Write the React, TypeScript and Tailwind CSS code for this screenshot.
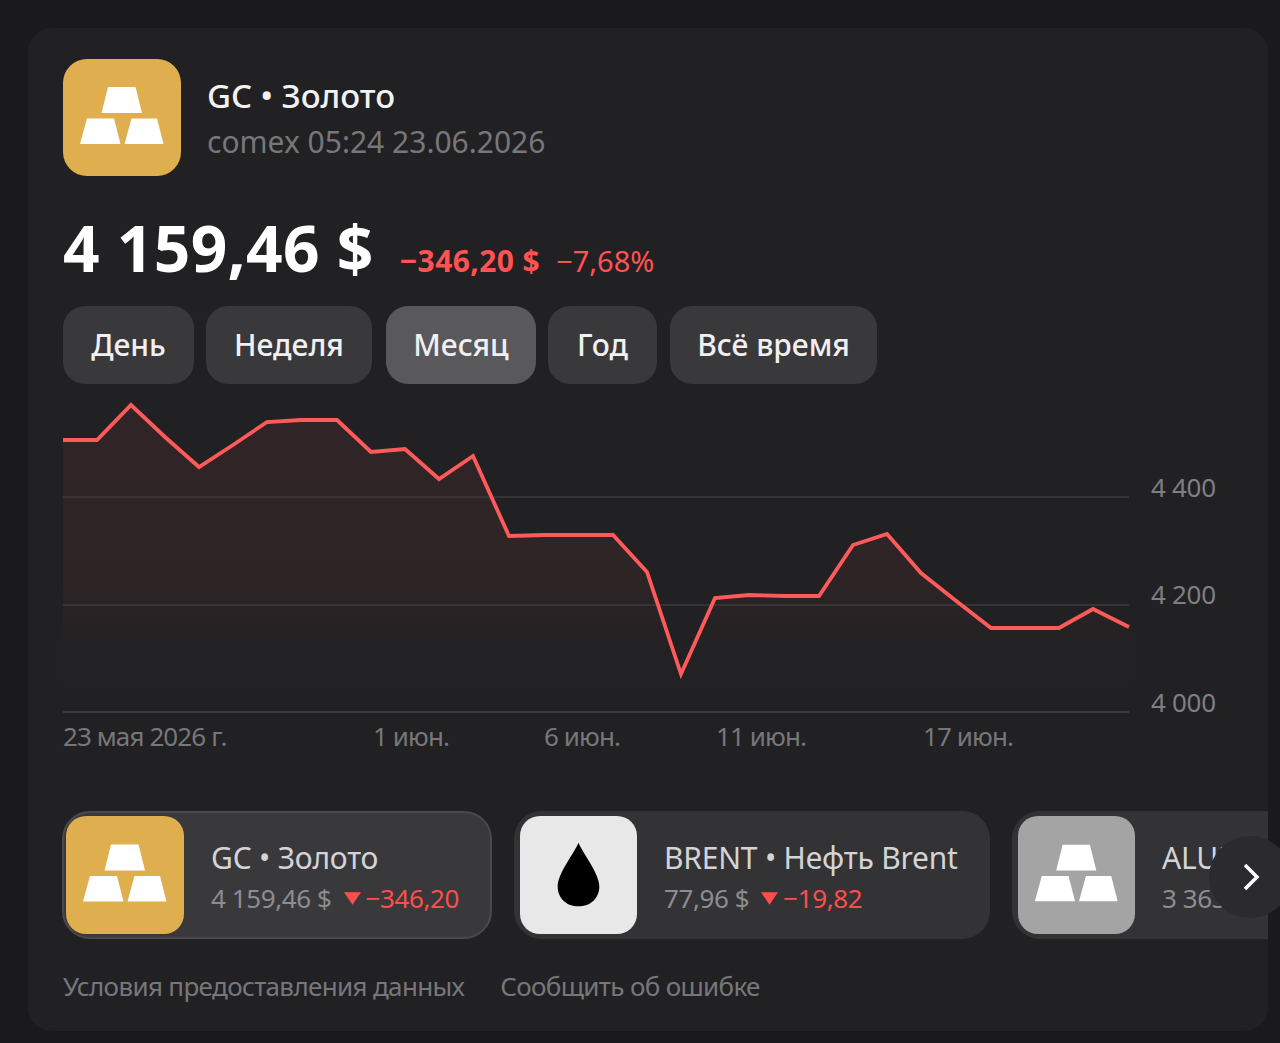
const font = { fontFamily: '"Noto Sans", "Liberation Sans", sans-serif' };

const pts = "63,440 97,440 131,405 165,437 199,467 233,445 267,422 301,420 337,420 371,452 405,449 439,479 473,456 509,536 545,535 580,535 613,535 647,572 681,674 715,598 749,595 785,596 819,596 853,545 887,534 921,573 955,600 991,628 1025,628 1059,628 1093,609 1129,627"
  .split(" ")
  .map((p) => {
    const [x, y] = p.split(",").map(Number);
    return `${x - 63},${y - 400}`;
  })
  .join(" ");

function Bars() {
  return (
    <svg viewBox="0 0 118 117" className="w-full h-full" fill="#fff">
      <path d="M45 28h27.500l6.500 26h-40.500z" />
      <path d="M24 59.500h27l6.500 25.500h-40.500z" />
      <path d="M68.500 59.500h25.500l6.500 25.500h-39z" />
    </svg>
  );
}

function Drop() {
  return (
    <svg viewBox="0 0 118 117" className="w-full h-full">
      <path d="M59 26c4 10 21 31 21 44 0 12-9 20-21 20s-21-8-21-20c0-13 17-34 21-44z" fill="#000" />
    </svg>
  );
}

function Tab({ label, active, width }: { label: string; active?: boolean; width: string }) {
  return (
    <div
      className={`${width} h-[78px] pb-[2px] rounded-[22px] flex items-center justify-center text-[30px] font-medium text-[#f0f0f0] ${
        active ? "bg-[#59595c]" : "bg-[#39393b]"
      }`}
    >
      <span>{label}</span>
    </div>
  );
}

function Ticker({
  width,
  name,
  price,
  change,
  iconBg,
  border,
  bg,
  clip,
  first,
  children,
}: {
  width: string;
  name: string;
  price: string;
  change?: string;
  iconBg: string;
  border: string;
  bg: string;
  clip?: boolean;
  first?: boolean;
  children: React.ReactNode;
}) {
  return (
    <div
      className={`${width} shrink-0 h-[128px] rounded-[28px] border-2 ${border} ${bg} flex items-center ${
        first ? "pl-[2px]" : "pl-[4px]"
      } overflow-hidden`}
    >
      <div className={`${first ? "w-[118px]" : "w-[117px]"} h-[118px] rounded-[20px] shrink-0 ${iconBg}`}>{children}</div>
      <div className={`ml-[27px] pt-[5px] flex flex-col ${clip ? "w-[60px] overflow-hidden" : ""}`}>
        <div className="text-[30px] leading-[41px] text-[#d4d4d6] tracking-[-0.2px] whitespace-nowrap">{name}</div>
        <div className="text-[26px] leading-[41px] text-[#8d8d90] tracking-[-0.4px] whitespace-nowrap flex items-center">
          <span>{price}</span>
          {change && (
            <>
              <svg viewBox="0 0 18 13" className="w-[17px] h-[13px] ml-[12px] mr-[5px]">
                <path d="M0 0h18l-9 13z" fill="#ff4d4d" />
              </svg>
              <span className="text-[#ff4d4d]">{change}</span>
            </>
          )}
        </div>
      </div>
    </div>
  );
}

export default function App() {
  return (
    <div className="w-[1280px] h-[1043px] overflow-hidden bg-[#1a1a1c] pt-[28px] pl-[28px] relative" style={font}>
      <div className="w-[1240px] h-[1003px] bg-[#212123] rounded-[24px] overflow-hidden pt-[31px] pl-[35px]">
        <div className="flex items-center">
          <div className="w-[118px] h-[117px] rounded-[24px] bg-[#dfae4f]">
            <Bars />
          </div>
          <div className="ml-[26px] pt-[2px] flex flex-col">
            <div className="text-[33px] leading-[47px] font-medium text-[#f2f2f2]">GC • Золото</div>
            <div className="text-[30px] leading-[46px] text-[#77777a]">comex 05:24 23.06.2026</div>
          </div>
        </div>

        <div className="mt-[34px] flex items-baseline h-[76px]">
          <span className="text-[64px] leading-[76px] font-bold text-white tracking-[0.3px]">4 159,46 $</span>
          <span className="ml-[26px] text-[30px] font-bold text-[#ff5252] tracking-[0.4px]">−346,20 $</span>
          <span className="ml-[16px] text-[29px] text-[#ff5252]">−7,68%</span>
        </div>

        <div className="mt-[20px] flex">
          <Tab label="День" width="w-[131px]" />
          <Tab label="Неделя" width="w-[166px] ml-[12px]" />
          <Tab label="Месяц" active width="w-[150px] ml-[14px]" />
          <Tab label="Год" width="w-[109px] ml-[12px]" />
          <Tab label="Всё время" width="w-[207px] ml-[13px]" />
        </div>

        <div className="mt-[16px] flex">
          <svg width="1067" height="314" viewBox="0 0 1067 314" className="shrink-0 block">
            <defs>
              <linearGradient id="f" x1="0" y1="0" x2="0" y2="1">
                <stop offset="0" stopColor="#ff5252" stopOpacity="0.07" />
                <stop offset="0.55" stopColor="#ff5252" stopOpacity="0.06" />
                <stop offset="0.8" stopColor="#ff5252" stopOpacity="0.005" />
                <stop offset="1" stopColor="#ff5252" stopOpacity="0" />
              </linearGradient>
            </defs>
            <polygon points={`0,312 ${pts} 1067,312`} fill="url(#f)" />
            <line x1="0" x2="1066" y1="97" y2="97" stroke="#3b3b3d" strokeWidth="1.500" />
            <line x1="0" x2="1066" y1="205" y2="205" stroke="#3b3b3d" strokeWidth="1.500" />
            <line x1="0" x2="1066" y1="312" y2="312" stroke="#3b3b3d" strokeWidth="2" />
            <polyline points={pts} fill="none" stroke="#ff5a5a" strokeWidth="3.800" strokeLinejoin="miter" />
          </svg>
          <div className="relative ml-[21px] text-[26px] leading-[32px] text-[#7f7f82] tracking-[-0.3px]">
            <div className="absolute top-[71px] whitespace-nowrap">4 400</div>
            <div className="absolute top-[178px] whitespace-nowrap">4 200</div>
            <div className="absolute top-[286px] whitespace-nowrap">4 000</div>
          </div>
        </div>

        <div className="relative h-[32px] mt-[6px] text-[26px] leading-[32px] text-[#77777a] tracking-[-0.9px]">
          <span className="absolute left-0 whitespace-nowrap">23 мая 2026 г.</span>
          <span className="absolute left-[310px] whitespace-nowrap">1 июн.</span>
          <span className="absolute left-[481px] whitespace-nowrap">6 июн.</span>
          <span className="absolute left-[653px] whitespace-nowrap">11 июн.</span>
          <span className="absolute left-[860px] whitespace-nowrap">17 июн.</span>
        </div>

        <div className="mt-[59px] -ml-[1px] flex gap-[22px]">
          <Ticker first width="w-[430px]" name="GC • Золото" price="4 159,46 $" change="−346,20" iconBg="bg-[#dfae4f]" border="border-[#4a4a4c]" bg="bg-[#39393b]">
            <Bars />
          </Ticker>
          <Ticker width="w-[476px]" name="BRENT • Нефть Brent" price="77,96 $" change="−19,82" iconBg="bg-[#e8e8e9]" border="border-[#333335]" bg="bg-[#333335]">
            <Drop />
          </Ticker>
          <Ticker width="w-[300px]" name="ALUMINIUM" price="3 363,00 $" iconBg="bg-[#a4a4a5]" border="border-[#333335]" bg="bg-[#333335]" clip>
            <Bars />
          </Ticker>
        </div>

        <div className="mt-[29px] flex gap-[36px] text-[26px] leading-[36px] text-[#77777a] tracking-[-0.65px]">
          <span>Условия предоставления данных</span>
          <span>Сообщить об ошибке</span>
        </div>
      </div>

      <div className="absolute left-[1209px] top-[836px] w-[82px] h-[82px] rounded-full bg-[#2b2b2d] flex items-center pl-[33px]">
        <svg viewBox="0 0 18 30" className="w-[18px] h-[30px]">
          <path d="M3 3l12 12L3 27" fill="none" stroke="#fff" strokeWidth="3.500" />
        </svg>
      </div>
    </div>
  );
}
